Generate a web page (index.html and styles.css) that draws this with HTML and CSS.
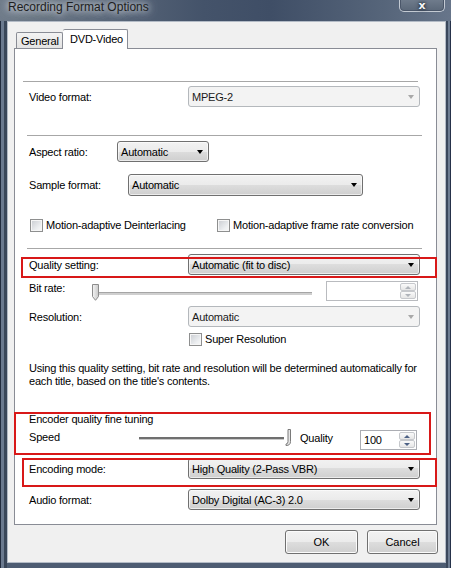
FILE: index.html
```html
<!DOCTYPE html>
<html>
<head>
<meta charset="utf-8">
<title>Recording Format Options</title>
<link rel="stylesheet" href="styles.css">
</head>
<body>
<div class="titlebar">
  <span class="title">Recording Format Options</span>
  <div class="close"><span>x</span></div>
</div>
<div class="client">
  <div class="tabs">
    <div class="tab">General</div>
    <div class="tab active">DVD-Video</div>
  </div>
  <div class="panel">
    <div class="sep sep-first"></div>
    <div class="row row-video">
      <span class="lbl lbl-wide">Video format:</span>
      <div class="combo disabled w-wide"><span>MPEG-2</span><i class="arrow"></i></div>
    </div>
    <div class="sep sep-second"></div>
    <div class="row row-aspect">
      <span class="lbl lbl-aspect">Aspect ratio:</span>
      <div class="combo w-aspect"><span>Automatic</span><i class="arrow"></i></div>
    </div>
    <div class="row row-sample">
      <span class="lbl lbl-sample">Sample format:</span>
      <div class="combo w-sample"><span>Automatic</span><i class="arrow"></i></div>
    </div>
    <div class="row row-checks">
      <div class="check check-first"><i class="cb"></i><span>Motion-adaptive Deinterlacing</span></div>
      <div class="check"><i class="cb"></i><span>Motion-adaptive frame rate conversion</span></div>
    </div>
    <div class="sep sep-third"></div>
    <div class="row row-quality">
      <span class="lbl lbl-wide">Quality setting:</span>
      <div class="combo w-wide"><span>Automatic (fit to disc)</span><i class="arrow"></i></div>
    </div>
    <div class="row row-bitrate">
      <span class="lbl lbl-top lbl-bitrate">Bit rate:</span>
      <div class="slider slider-bitrate">
        <div class="track track-light"></div>
        <svg class="thumb thumb-bitrate" width="7" height="17" viewBox="0 0 7 17">
          <defs><linearGradient id="tg" x1="0" y1="0" x2="1" y2="0"><stop offset="0" stop-color="#f4f4f4"/><stop offset="1" stop-color="#c9c9c9"/></linearGradient></defs>
          <path d="M0.5 0.5 H6.5 V12.5 L3.5 16.3 L0.5 12.5 Z" fill="url(#tg)" stroke="#8c8c8c"/>
        </svg>
      </div>
      <div class="spin spin-bitrate">
        <span></span>
        <div class="spin-btns"><i class="spin-btn"><b class="up dim"></b></i><i class="spin-btn"><b class="down dim"></b></i></div>
      </div>
    </div>
    <div class="row row-resolution">
      <span class="lbl lbl-wide">Resolution:</span>
      <div class="combo disabled w-wide"><span>Automatic</span><i class="arrow"></i></div>
    </div>
    <div class="row row-super">
      <div class="check check-super"><i class="cb"></i><span>Super Resolution</span></div>
    </div>
    <p class="desc">Using this quality setting, bit rate and resolution will be determined automatically for<br>each title, based on the title's contents.</p>
    <div class="enc-title">Encoder quality fine tuning</div>
    <div class="row row-speed">
      <span class="lbl lbl-top lbl-speed">Speed</span>
      <div class="slider slider-speed">
        <div class="track track-dark"></div>
        <svg class="thumb thumb-speed" width="7" height="17" viewBox="0 0 7 17">
          <path d="M3 0.5 H5.5 V12.5 Q5.5 16.5 1 16.5 L1 15 Q3 15 3 12.5 Z" fill="#e6e6e6" stroke="#7a7a7a"/>
        </svg>
      </div>
      <span class="lbl lbl-top lbl-quality">Quality</span>
      <div class="spin spin-quality">
        <span>100</span>
        <div class="spin-btns"><i class="spin-btn"><b class="up"></b></i><i class="spin-btn"><b class="down"></b></i></div>
      </div>
    </div>
    <div class="row row-encoding">
      <span class="lbl lbl-wide">Encoding mode:</span>
      <div class="combo w-wide"><span>High Quality (2-Pass VBR)</span><i class="arrow"></i></div>
    </div>
    <div class="row row-audio">
      <span class="lbl lbl-wide">Audio format:</span>
      <div class="combo w-wide"><span>Dolby Digital (AC-3) 2.0</span><i class="arrow"></i></div>
    </div>
    <div class="hl hl-quality"></div>
    <div class="hl hl-encoder"></div>
    <div class="hl hl-encoding"></div>
  </div>
  <div class="buttons">
    <button class="btn btn-ok">OK</button>
    <button class="btn btn-cancel">Cancel</button>
  </div>
</div>
</body>
</html>
```

FILE: styles.css
```css
* { box-sizing: border-box; }
html, body { margin: 0; padding: 0; }
body {
  width: 451px;
  height: 568px;
  overflow: hidden;
  font-family: "Liberation Sans", Arial, sans-serif;
  font-size: 11px;
  letter-spacing: -0.2px;
  color: #000;
  background:
    linear-gradient(270deg, #26324a 0, #26324a 1px, #6e7d92 1px, #6e7d92 3px, #3b485c 3px, #3b485c 5px, transparent 5px),
    linear-gradient(90deg, #222c3e 0, #222c3e 1px, #6b7a8f 1px, #6b7a8f 4px, #3a4759 4px, #3a4759 7px, transparent 7px),
    #4d5c72;
}

/* title bar */
.titlebar {
  height: 21px;
  display: flex;
  align-items: flex-start;
  background: linear-gradient(90deg, #6f7b8a 0%, #5d6a7b 20%, #44536a 45%, #3f4e66 60%, #56657a 85%, #67758a 100%);
}
.title {
  margin: 0 0 0 8px;
  font-size: 12px;
  letter-spacing: 0;
  line-height: 14px;
  color: #1e1e1e;
  text-shadow: 0 0 6px rgba(225, 230, 236, 0.95), 0 0 10px rgba(225, 230, 236, 0.8), 0 0 14px rgba(225, 230, 236, 0.6);
}
.close {
  margin: -6px 6px 0 auto;
  width: 46px;
  height: 18px;
  border: 1px solid #c3cad3;
  border-top: none;
  border-radius: 0 0 5px 5px;
  background: linear-gradient(#7a8696, #5a6778);
  box-shadow: inset 0 0 0 1px #4a5669;
  display: flex;
  justify-content: center;
  align-items: flex-start;
}
.close span {
  font-family: "DejaVu Sans", sans-serif;
  font-weight: bold;
  font-size: 11px;
  line-height: 10px;
  margin-top: 7px;
  color: #f4f6f8;
  text-shadow: 0 0 2px #1c2430, 0 0 4px #1c2430;
}

/* client area */
.client {
  margin-left: 7px;
  width: 439px;
  height: 542px;
  background: #f0f0f0;
  border: 1px solid #b3bbc6;
}
.tabs {
  margin-top: 7px;
  padding-left: 8px;
  height: 19px;
  display: flex;
  align-items: flex-end;
}
.tab {
  height: 16px;
  width: 47px;
  border: 1px solid #898c95;
  border-bottom: none;
  border-radius: 2px 2px 0 0;
  background: linear-gradient(#f3f3f3, #e3e3e3);
  padding: 2px 0 0 4px;
  line-height: 12px;
}
.tab.active {
  height: 20px;
  width: 65px;
  margin-bottom: -1px;
  background: #fff;
  position: relative;
  z-index: 1;
  padding: 3px 0 0 7px;
  border-left: none;
}
.panel {
  position: relative;
  margin-left: 6px;
  width: 423px;
  height: 477px;
  border: 1px solid #898c95;
  background: #fff;
}

.sep { height: 1px; width: 395px; background: #a7a7a7; }
.sep-first { margin: 32px 0 0 8px; }
.sep-second { margin: 28px 0 0 12px; }
.sep-third { margin: 16px 0 0 12px; }

.row { display: flex; align-items: center; padding-left: 14px; }
.row-video { margin-top: 4px; height: 21px; }
.row-aspect { margin-top: 5px; height: 21px; }
.row-sample { margin-top: 12px; height: 22px; }
.row-checks { margin-top: 23px; height: 13px; }
.row-quality { margin-top: 5px; height: 21px; }
.row-bitrate { margin-top: 6px; height: 20px; align-items: flex-start; }
.row-resolution { margin-top: 5px; height: 21px; }
.row-super { margin-top: 6px; height: 13px; }
.row-speed { margin-top: 4px; height: 20px; align-items: flex-start; }
.row-encoding { margin-top: 8px; height: 21px; }
.row-audio { margin-top: 10px; height: 21px; }

.lbl { flex: none; line-height: 14px; white-space: nowrap; }
.lbl-wide { width: 159px; }
.lbl-aspect { width: 88px; }
.lbl-sample { width: 99px; }
.lbl-bitrate { width: 63px; }
.lbl-speed { width: 110px; margin-top: 0; }
.lbl-quality { width: 60px; margin-left: 9px; margin-top: 1px; }

/* combo boxes */
.combo {
  flex: none;
  height: 100%;
  display: flex;
  align-items: center;
  padding-left: 3px;
  border: 1px solid #707070;
  border-radius: 3px;
  background: linear-gradient(#f2f2f2, #ebebeb 50%, #dddddd 50%, #cfcfcf);
  box-shadow: inset 0 0 0 1px rgba(255, 255, 255, 0.6);
  white-space: nowrap;
}
.combo .arrow {
  margin-left: auto;
  margin-right: 5px;
  width: 0;
  height: 0;
  border-left: 3.5px solid transparent;
  border-right: 3.5px solid transparent;
  border-top: 4px solid #000;
}
.combo.disabled {
  border-color: #b4b8bc;
  background: #f3f3f3;
  box-shadow: none;
  color: #1a1a1a;
}
.combo.disabled .arrow { border-top-color: #a8a8a8; }
.w-wide { width: 232px; }
.w-aspect { width: 92px; }
.w-sample { width: 235px; }

/* checkboxes */
.check { display: flex; align-items: center; gap: 3px; white-space: nowrap; line-height: 13px; }
.check-first { width: 187px; margin-left: 1px; }
.check-super { margin-left: 160px; }
.cb {
  flex: none;
  width: 13px;
  height: 13px;
  border: 1px solid #8e8f8f;
  background: linear-gradient(135deg, #c9ccd1, #eef0f2 70%, #f8f8f8);
  box-shadow: inset 0 0 0 1px #f6f6f6;
}

/* sliders */
.slider { position: relative; flex: none; height: 20px; }
.slider-bitrate { width: 220px; }
.slider-speed { width: 152px; }
.track { height: 3px; }
.track-light {
  margin: 11px 0 0 3px;
  background: #cfcfcf;
  border-top: 1px solid #a5a5a5;
}
.track-dark {
  margin: 7px 7px 0 0;
  background: #6f6f6f;
  border-bottom: 1px solid #c8c8c8;
  height: 3px;
}
.thumb { position: absolute; }
.thumb-bitrate { left: 0; top: 3px; }
.thumb-speed { left: 146px; top: -1px; }

/* spin boxes */
.spin {
  flex: none;
  height: 20px;
  display: flex;
  align-items: center;
  padding-left: 3px;
  background: #fff;
  border: 1px solid #abadb3;
}
.spin-bitrate { width: 92px; margin-left: 14px; border-color: #b9bbbf; }
.spin-quality { width: 57px; }
.spin-btns {
  margin-left: auto;
  margin-right: 1px;
  width: 16px;
  height: 16px;
  display: flex;
  flex-direction: column;
}
.spin-btn {
  height: 8px;
  border: 1px solid #c6c8cc;
  border-radius: 2px;
  background: linear-gradient(#fafafa, #e6e6e6);
  display: flex;
  align-items: center;
  justify-content: center;
}
.spin-btn b { width: 0; height: 0; border-left: 3px solid transparent; border-right: 3px solid transparent; }
.spin-btn .up { border-bottom: 3px solid #4d6185; }
.spin-btn .down { border-top: 3px solid #4d6185; }
.spin-btn .up.dim { border-bottom-color: #b0b4ba; }
.spin-btn .down.dim { border-top-color: #b0b4ba; }

/* text */
.desc {
  margin: 16px 0 0 14px;
  line-height: 13px;
  white-space: nowrap;
}
.enc-title { margin: 24px 0 0 14px; line-height: 14px; }

/* red highlight annotations */
.hl { position: absolute; border: 2px solid #d81818; pointer-events: none; }
.hl-quality { left: 6px; top: 208px; width: 416px; height: 21px; }
.hl-encoder { left: -1px; top: 363px; width: 417px; height: 43px; }
.hl-encoding { left: 7px; top: 409px; width: 415px; height: 29px; }

/* buttons */
.buttons {
  display: flex;
  justify-content: flex-end;
  gap: 9px;
  margin-top: 5px;
  padding-right: 7px;
}
.btn {
  height: 24px;
  font: inherit;
  color: #000;
  border: 1px solid #707070;
  border-radius: 3px;
  background: linear-gradient(#f2f2f2, #ebebeb 50%, #dddddd 50%, #cfcfcf);
  box-shadow: inset 0 0 0 1px #fbfbfb;
  padding: 0;
}
.btn-ok { width: 73px; }
.btn-cancel { width: 71px; }
```
